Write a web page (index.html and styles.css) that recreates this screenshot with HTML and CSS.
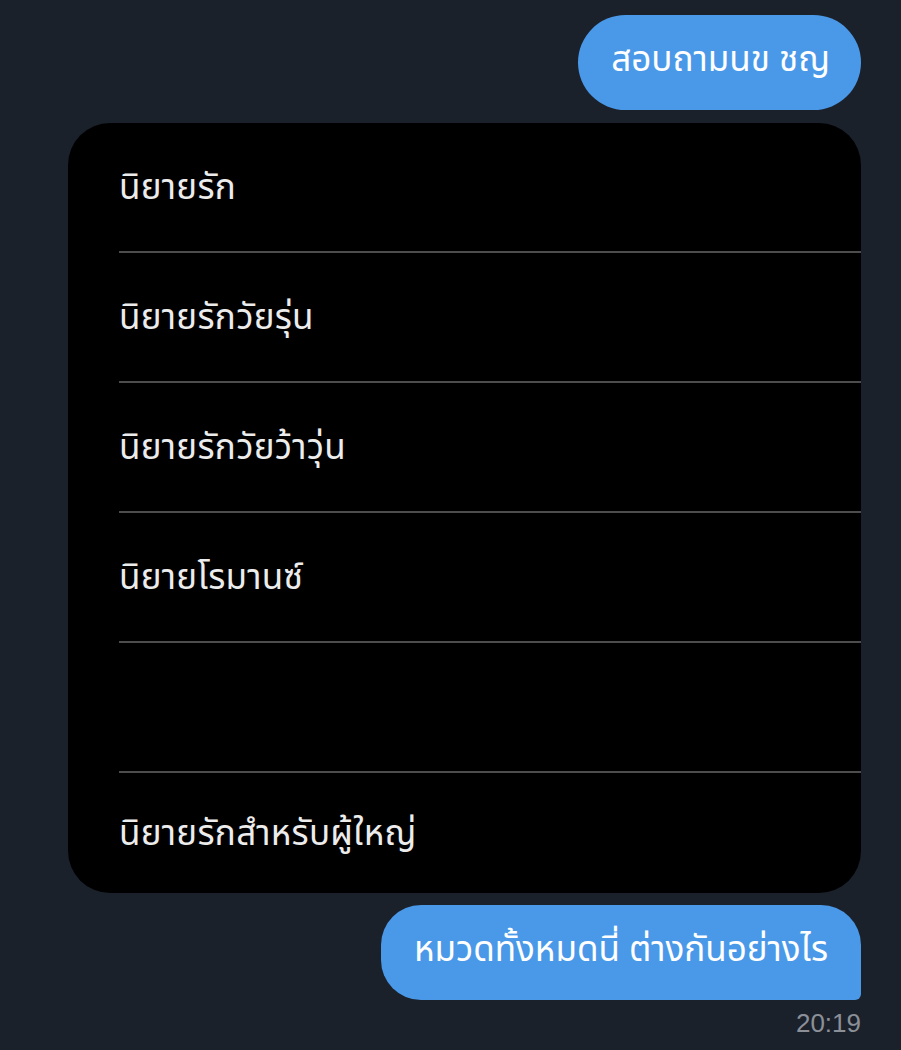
FILE: index.html
```html
<!DOCTYPE html>
<html lang="th">
<head>
<meta charset="utf-8">
<link rel="stylesheet" href="styles.css">
</head>
<body>
<div class="chat">
  <div class="msg-row">
    <div class="bubble bubble-top">สอบถามนข ชญ</div>
  </div>
  <div class="card">
    <div class="item"><span>นิยายรัก</span></div>
    <div class="item"><span>นิยายรักวัยรุ่น</span></div>
    <div class="item"><span>นิยายรักวัยว้าวุ่น</span></div>
    <div class="item"><span>นิยายโรมานซ์</span></div>
    <div class="item"><span class="hidden-text"></span></div>
    <div class="item item-last"><span>นิยายรักสำหรับผู้ใหญ่</span></div>
  </div>
  <div class="msg-row">
    <div class="bubble bubble-bottom">หมวดทั้งหมดนี่ ต่างกันอย่างไร</div>
  </div>
  <div class="time">20:19</div>
</div>
</body>
</html>
```

FILE: styles.css
```css
html, body {
  margin: 0;
  padding: 0;
  background: #1b212b;
}
body {
  width: 901px;
  height: 1050px;
  overflow: hidden;
  font-family: "Noto Sans Thai", "Noto Sans", "DejaVu Sans", sans-serif;
}
.chat {
  display: flex;
  flex-direction: column;
  padding: 15px 40px 0 68px;
}
.msg-row {
  display: flex;
  justify-content: flex-end;
}
.bubble {
  background: #4a99e9;
  color: #ffffff;
  font-size: 35px;
  height: 95px;
  display: flex;
  align-items: center;
  box-sizing: border-box;
}
.bubble-top {
  border-radius: 48px;
  padding: 0 31px 4px 33px;
}
.bubble-bottom {
  border-radius: 40px 40px 6px 40px;
  padding: 0 33px 4px 33px;
}
.card {
  margin-top: 13px;
  margin-bottom: 12px;
  background: #000000;
  border-radius: 42px;
  overflow: hidden;
  padding-left: 51px;
}
.item {
  height: 128px;
  border-bottom: 2px solid #4d4d4d;
  display: flex;
  align-items: center;
  color: #ececec;
  font-size: 35px;
  letter-spacing: 0.3px;
}
.item span {
  position: relative;
  top: 1px;
}
.item-last {
  height: 120px;
  border-bottom: none;
}
.time {
  align-self: flex-end;
  margin-top: 8px;
  color: #8b9098;
  font-size: 26px;
  font-family: "Liberation Sans", Arial, sans-serif;
}
```
